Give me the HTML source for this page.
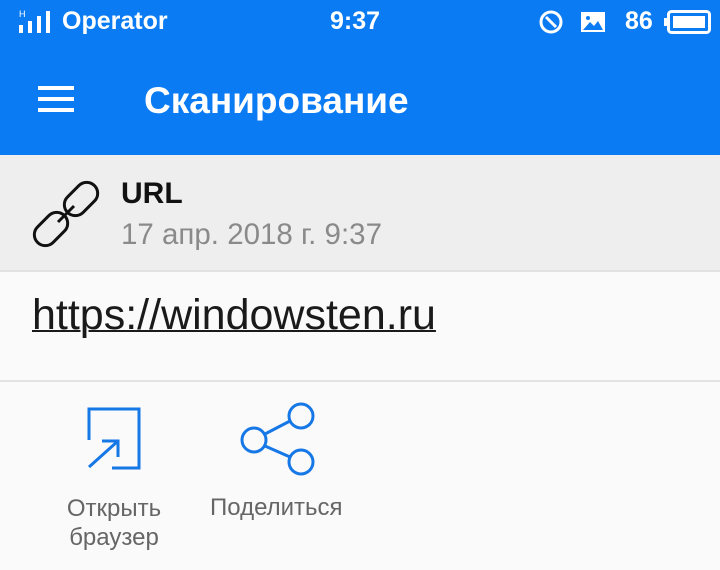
<!DOCTYPE html>
<html><head><meta charset="utf-8"><style>
*{margin:0;padding:0;box-sizing:border-box}
body{width:720px;height:570px;overflow:hidden;background:#fafafa;font-family:"Liberation Sans",sans-serif;position:relative}
.hdr{position:absolute;left:0;top:0;width:720px;height:155px;background:#0a7bf3;color:#fff}
.t{position:absolute;white-space:nowrap}
.gray{position:absolute;left:0;top:155px;width:720px;height:117px;background:#eeeeee;border-bottom:2px solid #e2e2e2}
.line{position:absolute;left:0;top:380px;width:720px;height:2px;background:#e2e2e2}
</style></head><body>
<div class="hdr">
  <svg class="t" style="left:18px;top:8px" width="40" height="26" viewBox="0 0 40 26" fill="#fff">
    <text x="1" y="9" font-size="9" font-family="Liberation Sans" fill="#fff">H</text>
    <rect x="1" y="17" width="4" height="8"/><rect x="10" y="13" width="4" height="12"/><rect x="19" y="8" width="4" height="17"/><rect x="28" y="3" width="4" height="22"/>
  </svg>
  <div class="t" style="left:62px;top:7px;font-size:25px;font-weight:bold">Operator</div>
  <div class="t" style="left:330px;top:7px;font-size:25px;font-weight:bold">9:37</div>
  <svg class="t" style="left:538px;top:9px" width="26" height="26" viewBox="0 0 26 26"><circle cx="13" cy="13" r="10" fill="none" stroke="#fff" stroke-width="3"/><line x1="8" y1="8" x2="18" y2="18" stroke="#fff" stroke-width="3"/></svg>
  <svg class="t" style="left:580px;top:11px" width="26" height="22" viewBox="0 0 26 22"><rect x="1" y="1" width="24" height="20" fill="#fff"/><path d="M3 19 L10 11 L14 15 L18 10 L23 19Z" fill="#0a7bf3"/><circle cx="8" cy="7" r="2" fill="#0a7bf3"/></svg>
  <div class="t" style="left:625px;top:7px;font-size:25px;font-weight:bold">86</div>
  <svg class="t" style="left:664px;top:10px" width="48" height="24" viewBox="0 0 48 24"><rect x="0" y="8" width="3" height="8" fill="#fff"/><rect x="4.5" y="1.5" width="41" height="21" rx="3" fill="none" stroke="#fff" stroke-width="3"/><rect x="9" y="6" width="32" height="12" fill="#fff"/></svg>
  <div class="t" style="left:38px;top:86px;width:36px;height:4px;background:#fff"></div>
  <div class="t" style="left:38px;top:97px;width:36px;height:4px;background:#fff"></div>
  <div class="t" style="left:38px;top:108px;width:36px;height:4px;background:#fff"></div>
  <div class="t" style="left:144px;top:80px;font-size:37px;font-weight:bold">Сканирование</div>
</div>
<div class="gray">
  <svg class="t" style="left:30px;top:22px" width="74" height="74" viewBox="0 0 74 74" fill="none" stroke="#111" stroke-width="3">
    <rect x="40" y="3" width="22" height="38" rx="11" transform="rotate(45 51 22)"/>
    <rect x="10" y="33" width="22" height="38" rx="11" transform="rotate(45 21 52)"/>
    <line x1="28" y1="45" x2="44" y2="29"/>
  </svg>
  <div class="t" style="left:121px;top:22px;font-size:30px;font-weight:bold;color:#111">URL</div>
  <div class="t" style="left:121px;top:63px;font-size:29.5px;color:#8a8a8a">17 апр. 2018 г. 9:37</div>
</div>
<div class="t" style="left:32px;top:291px;font-size:43px;color:#1a1a1a;text-decoration:underline;text-decoration-thickness:2px">https://windowsten.ru</div>
<div class="line"></div>
<svg class="t" style="left:84px;top:404px" width="60" height="70" viewBox="0 0 60 70" fill="none" stroke="#1677e6" stroke-width="3">
  <path d="M5 36 V5 H55 V64 H28"/>
  <line x1="5" y1="63" x2="34" y2="37"/>
  <path d="M18 37 H34 V53"/>
</svg>
<svg class="t" style="left:236px;top:398px" width="86" height="82" viewBox="0 0 86 82" fill="none" stroke="#1677e6" stroke-width="3">
  <circle cx="18" cy="42" r="12"/><circle cx="65" cy="18" r="12"/><circle cx="65" cy="64" r="12"/>
  <line x1="29" y1="36" x2="54" y2="23"/><line x1="29" y1="48" x2="54" y2="59"/>
</svg>
<div class="t" style="left:62px;top:494px;font-size:24px;color:#666;text-align:center;width:104px;line-height:29px">Открыть<br>браузер</div>
<div class="t" style="left:210px;top:494px;font-size:24px;color:#666">Поделиться</div>
</body></html>
